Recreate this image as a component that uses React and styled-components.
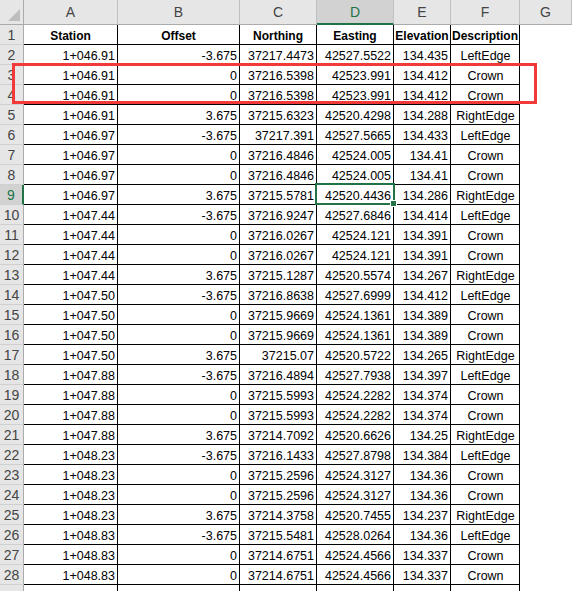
import styled, { createGlobalStyle } from "styled-components";

const GlobalStyle = createGlobalStyle`
  html, body {
    margin: 0;
    padding: 0;
    background: #ffffff;
    overflow: hidden;
  }
`;

const widths = [94, 122, 77, 77, 57, 69, 52];
const letters = ["A", "B", "C", "D", "E", "F", "G"];

const rows = [
  ["1+046.91", "-3.675", "37217.4473", "42527.5522", "134.435", "LeftEdge"],
  ["1+046.91", "0", "37216.5398", "42523.991", "134.412", "Crown"],
  ["1+046.91", "0", "37216.5398", "42523.991", "134.412", "Crown"],
  ["1+046.91", "3.675", "37215.6323", "42520.4298", "134.288", "RightEdge"],
  ["1+046.97", "-3.675", "37217.391", "42527.5665", "134.433", "LeftEdge"],
  ["1+046.97", "0", "37216.4846", "42524.005", "134.41", "Crown"],
  ["1+046.97", "0", "37216.4846", "42524.005", "134.41", "Crown"],
  ["1+046.97", "3.675", "37215.5781", "42520.4436", "134.286", "RightEdge"],
  ["1+047.44", "-3.675", "37216.9247", "42527.6846", "134.414", "LeftEdge"],
  ["1+047.44", "0", "37216.0267", "42524.121", "134.391", "Crown"],
  ["1+047.44", "0", "37216.0267", "42524.121", "134.391", "Crown"],
  ["1+047.44", "3.675", "37215.1287", "42520.5574", "134.267", "RightEdge"],
  ["1+047.50", "-3.675", "37216.8638", "42527.6999", "134.412", "LeftEdge"],
  ["1+047.50", "0", "37215.9669", "42524.1361", "134.389", "Crown"],
  ["1+047.50", "0", "37215.9669", "42524.1361", "134.389", "Crown"],
  ["1+047.50", "3.675", "37215.07", "42520.5722", "134.265", "RightEdge"],
  ["1+047.88", "-3.675", "37216.4894", "42527.7938", "134.397", "LeftEdge"],
  ["1+047.88", "0", "37215.5993", "42524.2282", "134.374", "Crown"],
  ["1+047.88", "0", "37215.5993", "42524.2282", "134.374", "Crown"],
  ["1+047.88", "3.675", "37214.7092", "42520.6626", "134.25", "RightEdge"],
  ["1+048.23", "-3.675", "37216.1433", "42527.8798", "134.384", "LeftEdge"],
  ["1+048.23", "0", "37215.2596", "42524.3127", "134.36", "Crown"],
  ["1+048.23", "0", "37215.2596", "42524.3127", "134.36", "Crown"],
  ["1+048.23", "3.675", "37214.3758", "42520.7455", "134.237", "RightEdge"],
  ["1+048.83", "-3.675", "37215.5481", "42528.0264", "134.36", "LeftEdge"],
  ["1+048.83", "0", "37214.6751", "42524.4566", "134.337", "Crown"],
  ["1+048.83", "0", "37214.6751", "42524.4566", "134.337", "Crown"],
];

const Sheet = styled.div`
  position: relative;
  width: 572px;
  height: 591px;
  overflow: hidden;
  background: #ffffff;
  font-family: "Liberation Sans", Arial, sans-serif;
  color: #000;
`;

const Row = styled.div`
  display: flex;
  height: ${(p) => (p.$head ? 25 : 20)}px;
`;

const Corner = styled.div`
  width: 24px;
  flex: none;
  box-sizing: border-box;
  background: #e6e6e6;
  border-right: 1px solid #ababab;
  border-bottom: 1px solid #ababab;
  display: flex;
  align-items: flex-end;
  justify-content: flex-end;
  padding: 0 3px 3px 0;
`;

const ColHead = styled.div`
  width: ${(p) => p.$w}px;
  flex: none;
  box-sizing: border-box;
  background: ${(p) => (p.$active ? "#d2d2d2" : "#e6e6e6")};
  border-right: 1px solid #c0c0c0;
  border-bottom: ${(p) => (p.$active ? "2px solid #217346" : "1px solid #ababab")};
  color: ${(p) => (p.$active ? "#217346" : "#444444")};
  font-size: 14px;
  display: flex;
  align-items: center;
  justify-content: center;
  padding-top: ${(p) => (p.$active ? 1 : 0)}px;
`;

const RowNum = styled.div`
  width: 24px;
  flex: none;
  box-sizing: border-box;
  background: ${(p) => (p.$active ? "#d2d2d2" : "#e6e6e6")};
  border-right: ${(p) => (p.$active ? "2px solid #217346" : "1px solid #ababab")};
  border-bottom: 1px solid #d0d0d0;
  color: ${(p) => (p.$active ? "#217346" : "#444444")};
  font-size: 14px;
  display: flex;
  align-items: center;
  justify-content: center;
`;

const Cell = styled.div`
  width: ${(p) => p.$w}px;
  flex: none;
  box-sizing: border-box;
  border-right: ${(p) => (p.$plain ? "none" : "1px solid #000")};
  border-bottom: ${(p) => (p.$plain ? "none" : "1px solid #000")};
  padding: ${(p) => (p.$bold ? "4px 0 0 0" : "4px 2px 0 3px")};
  font-size: ${(p) => (p.$bold ? 12 : 12.5)}px;
  font-weight: ${(p) => (p.$bold ? 700 : 400)};
  text-align: ${(p) => p.$align};
  white-space: nowrap;
  overflow: hidden;
  line-height: 15px;
`;

const Highlight = styled.div`
  position: absolute;
  left: 12px;
  top: 63px;
  width: 525px;
  height: 41px;
  box-sizing: border-box;
  border: 3px solid #f23a3a;
  pointer-events: none;
`;

const Selection = styled.div`
  position: absolute;
  left: 315px;
  top: 183px;
  width: 80px;
  height: 22px;
  box-sizing: border-box;
  border: 2px solid #217346;
`;

const FillHandle = styled.div`
  position: absolute;
  left: 390px;
  top: 200px;
  width: 7px;
  height: 7px;
  box-sizing: border-box;
  background: #217346;
  border: 1px solid #ffffff;
`;

const Partial = styled.div`
  display: flex;
  height: 6px;
`;

const PartialNum = styled.div`
  width: 24px;
  flex: none;
  box-sizing: border-box;
  background: #e6e6e6;
  border-right: 1px solid #ababab;
`;

const PartialCell = styled.div`
  width: ${(p) => p.$w}px;
  flex: none;
  box-sizing: border-box;
  border-right: ${(p) => (p.$plain ? "none" : "1px solid #000")};
`;

const headers = ["Station", "Offset", "Northing", "Easting", "Elevation", "Description"];

const align = (i) => (i === 5 ? "center" : "right");

export default function App() {
  return (
    <>
      <GlobalStyle />
      <Sheet>
        <Row $head>
          <Corner>
            <svg width="12" height="12" viewBox="0 0 12 12">
              <polygon points="0,12 12,0 12,12" fill="#bdbdbd" />
            </svg>
          </Corner>
          {letters.map((l, i) => (
            <ColHead key={l} $w={widths[i]} $active={l === "D"}>
              {l}
            </ColHead>
          ))}
        </Row>
        <Row>
          <RowNum>1</RowNum>
          {headers.map((h, i) => (
            <Cell key={h} $w={widths[i]} $align="center" $bold>
              {h}
            </Cell>
          ))}
          <Cell $w={widths[6]} $plain />
        </Row>
        {rows.map((r, ri) => (
          <Row key={ri}>
            <RowNum $active={ri + 2 === 9}>{ri + 2}</RowNum>
            {r.map((v, i) => (
              <Cell key={i} $w={widths[i]} $align={align(i)}>
                {v}
              </Cell>
            ))}
            <Cell $w={widths[6]} $plain />
          </Row>
        ))}
        <Partial>
          <PartialNum />
          {widths.map((w, i) => (
            <PartialCell key={i} $w={w} $plain={i === 6} />
          ))}
        </Partial>
        <Highlight />
        <Selection />
        <FillHandle />
      </Sheet>
    </>
  );
}
